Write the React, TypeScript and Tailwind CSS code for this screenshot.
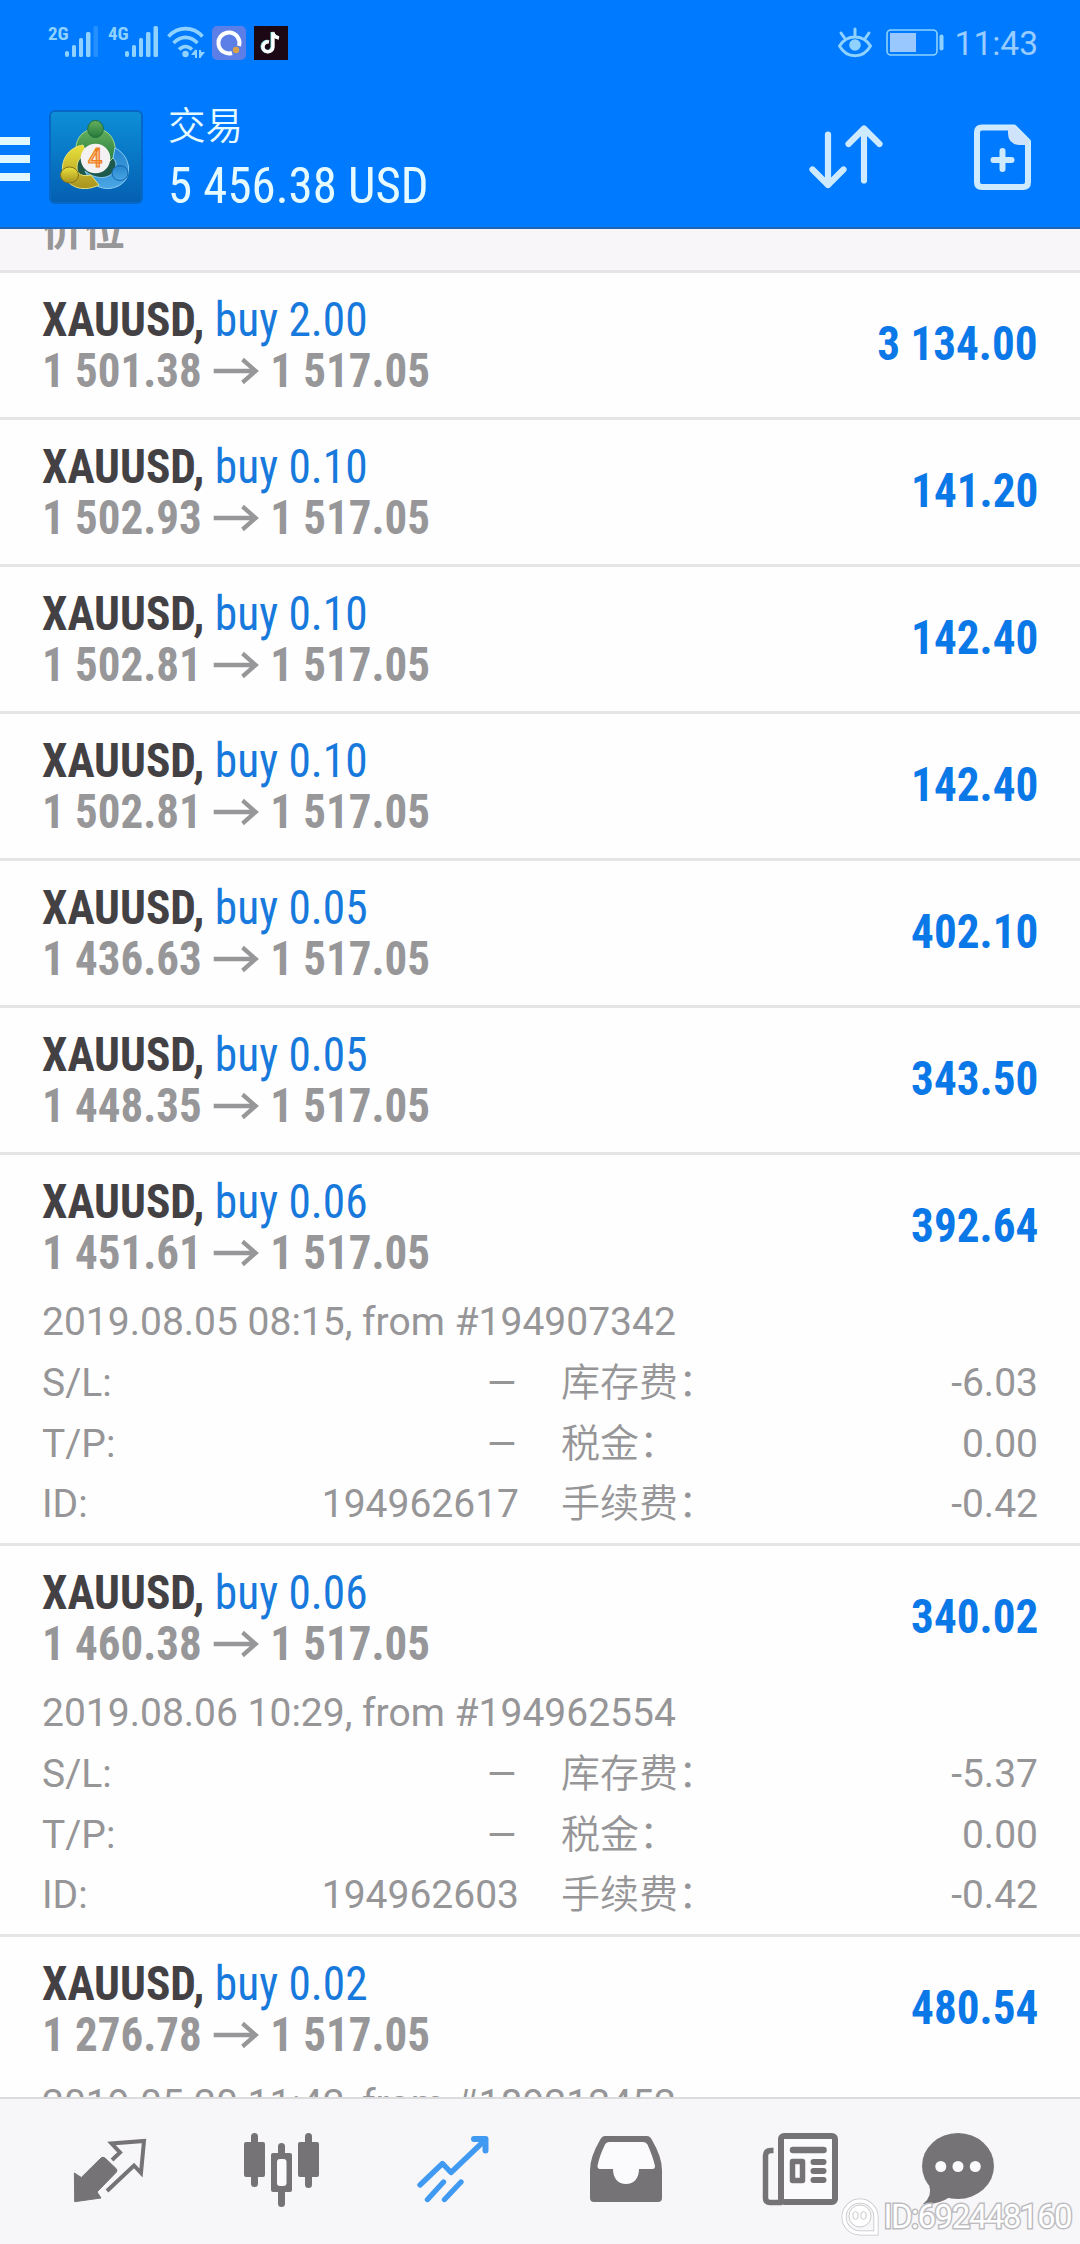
import type { ReactNode } from "react";

type Details = {
  date: string;
  id?: string;
  swap?: string;
  tax?: string;
  fee?: string;
};

type Position = {
  lots: string;
  open: string;
  profit: string;
  details?: Details;
};

const positions: Position[] = [
  { lots: "2.00", open: "1 501.38", profit: "3 134.00" },
  { lots: "0.10", open: "1 502.93", profit: "141.20" },
  { lots: "0.10", open: "1 502.81", profit: "142.40" },
  { lots: "0.10", open: "1 502.81", profit: "142.40" },
  { lots: "0.05", open: "1 436.63", profit: "402.10" },
  { lots: "0.05", open: "1 448.35", profit: "343.50" },
  {
    lots: "0.06",
    open: "1 451.61",
    profit: "392.64",
    details: {
      date: "2019.08.05 08:15, from #194907342",
      id: "194962617",
      swap: "-6.03",
      tax: "0.00",
      fee: "-0.42",
    },
  },
  {
    lots: "0.06",
    open: "1 460.38",
    profit: "340.02",
    details: {
      date: "2019.08.06 10:29, from #194962554",
      id: "194962603",
      swap: "-5.37",
      tax: "0.00",
      fee: "-0.42",
    },
  },
  {
    lots: "0.02",
    open: "1 276.78",
    profit: "480.54",
    details: { date: "2019.05.20 11:42, from #189212452" },
  },
];

const Signal = ({ label, weak }: { label: string; weak?: boolean }) => (
  <div className="flex h-[34px] items-start">
    <span className="w-[17px] font-['Roboto_Condensed',Roboto,sans-serif] text-[19px] leading-[16px] font-bold">
      {label}
    </span>
    <svg className="h-[34px] w-[34px]" viewBox="0 0 34 34" fill="currentColor">
      <rect x="0" y="25" width="4" height="6" rx="2" />
      <rect x="7" y="19" width="4" height="12" rx="1.5" />
      <rect x="14" y="12" width="4" height="19" rx="1.5" />
      <rect x="21" y="6" width="4.5" height="25" rx="1.5" />
      <rect x="28.5" y="0" width="4.5" height="31" rx="1.5" opacity={weak ? 0.25 : 1} />
    </svg>
  </div>
);

const StatusBar = () => (
  <div className="flex h-[86px] items-start justify-between pt-[26px] pr-[42px] pl-12 text-[#8fd2ff]">
    <div className="flex">
      <Signal label="2G" weak />
      <div className="ml-[9px]">
        <Signal label="4G" />
      </div>
      <svg className="ml-2 h-[34px] w-[38px]" viewBox="0 0 38 34" fill="none" stroke="currentColor" strokeWidth="3.6">
        <path d="M1.5 10.5C11 0 26 0 35.5 10.5" />
        <path d="M6.5 17C14 9.5 23 9.5 30.5 17" />
        <path d="M12 23.5C16 19.5 21 19.5 25 23.5" />
        <circle cx="18.5" cy="28" r="3.2" fill="currentColor" stroke="none" />
        <path d="M29 24v8M29 24l-3 4h3M33 24v8M33 31l3-4h-3" strokeWidth="2" />
      </svg>
      <svg className="ml-[7px] h-[34px] w-[34px]" viewBox="0 0 34 34">
        <rect width="34" height="34" rx="5" fill="#5b7fe6" />
        <path d="M20 27A10.5 10.5 0 1 1 27 20" fill="none" stroke="#fff" strokeWidth="4" />
        <circle cx="24" cy="24" r="3.2" fill="#d9a24a" />
      </svg>
      <svg className="ml-2 h-[34px] w-[34px]" viewBox="0 0 34 34">
        <rect width="34" height="34" fill="#1c0714" />
        <g fill="none" strokeWidth="3.4">
          <path d="M15 16a5 5 0 1 0 4 5V6.5c.5 3.500 3 5 6 5.500" stroke="#7fe3df" transform="translate(-.8 -.4)" />
          <path d="M15 16a5 5 0 1 0 4 5V6.5c.5 3.500 3 5 6 5.500" stroke="#fff" />
        </g>
      </svg>
    </div>
    <div className="flex">
      <svg className="h-[34px] w-[34px]" viewBox="0 0 34 34" fill="none" stroke="currentColor" strokeWidth="3" strokeLinecap="round">
        <path d="M1.5 20C9 8 25 8 32.5 20C25 33 9 33 1.5 20Z" />
        <circle cx="17" cy="19" r="5.8" fill="currentColor" stroke="none" />
        <path d="M17 9V3M6.5 12L3 7M27.5 12L31 7" />
      </svg>
      <svg className="ml-[14px] h-[34px] w-[60px]" viewBox="0 0 60 34">
        <rect x="1" y="4" width="50" height="25" rx="4" fill="none" stroke="currentColor" strokeWidth="1.6" />
        <rect x="4" y="7" width="26" height="19" fill="#99c8ff" />
        <rect x="53.5" y="8.5" width="4" height="16" rx="2" fill="currentColor" />
      </svg>
      <span className="ml-[9px] text-[33.5px] leading-[35px] text-[#99ccff]">11:43</span>
    </div>
  </div>
);

const AppLogo = () => (
  <svg className="h-[94px] w-[94px]" viewBox="0 0 94 94">
    <defs>
      <linearGradient id="tile" x1="0" y1="0" x2="0" y2="1">
        <stop offset="0" stopColor="#0d8fd8" />
        <stop offset="1" stopColor="#045fb2" />
      </linearGradient>
      <linearGradient id="green" x1="0" y1="0" x2="0" y2="1">
        <stop offset="0" stopColor="#64b05f" />
        <stop offset="1" stopColor="#24793a" />
      </linearGradient>
      <linearGradient id="yellow" x1="0" y1="0" x2="0" y2="1">
        <stop offset="0" stopColor="#eae23c" />
        <stop offset="1" stopColor="#a8921f" />
      </linearGradient>
      <linearGradient id="blue" x1="0" y1="0" x2="0" y2="1">
        <stop offset="0" stopColor="#2584cc" />
        <stop offset="1" stopColor="#4aa6e4" />
      </linearGradient>
    </defs>
    <rect x="1" y="1" width="92" height="92" rx="5" fill="url(#tile)" stroke="#0668c4" strokeWidth="2" />
    <circle cx="46.5" cy="50" r="21" fill="#1d5a4c" />
    <g strokeWidth="1" strokeLinejoin="round">
      <path d="M27 46C25 28 34 19 47 19C60 19 68 30 66 46L58 54C59 40 56 35 47 35C39 35 37 38 38 44Z" fill="url(#green)" stroke="#a9d98a" />
      <path d="M66 38C78 44 83 58 77 69C70 80 53 82 42 72L36 61C45 69 59 70 64 62C68 56 68 52 64 48Z" fill="url(#blue)" stroke="#8fd0f5" />
      <path d="M34 35C20 37 11 50 14 64C20 79 36 82 50 75L42 65C33 67 28 64 28 58C28 51 31 46 38 45Z" fill="url(#yellow)" stroke="#e8e27e" />
    </g>
    <ellipse cx="46.5" cy="19" rx="7.8" ry="8.5" fill="url(#green)" stroke="#1e6e3c" />
    <ellipse cx="20.5" cy="65" rx="9" ry="8" fill="url(#yellow)" stroke="#82741d" />
    <ellipse cx="71" cy="63" rx="8" ry="7.5" fill="url(#blue)" stroke="#1565ab" />
    <circle cx="46.5" cy="48.5" r="14.8" fill="#f4f1f2" />
    <text x="46" y="57" textAnchor="middle" fontFamily="Roboto, sans-serif" fontSize="25" fontWeight="500" fill="#fbc38a" stroke="#ee7d1c" strokeWidth="1.2">
      4
    </text>
  </svg>
);

const Header = () => (
  <header className="flex h-[229px] shrink-0 flex-col border-b-2 border-[#1a65b8] bg-[#007aff]">
    <StatusBar />
    <div className="flex flex-1 items-start">
      <div className="mt-[51px] flex w-[30px] flex-col gap-[10px]">
        <div className="h-2 bg-[#e2f8ff]" />
        <div className="h-2 bg-[#e2f8ff]" />
        <div className="h-2 bg-[#e2f8ff]" />
      </div>
      <div className="mt-6 ml-[19px]">
        <AppLogo />
      </div>
      <div className="mt-[13px] ml-[25px] flex-1 text-[#e6fbff]">
        <div className="text-[37.5px] leading-[54px] font-[350]">交易</div>
        <div className="origin-left scale-x-[0.977] font-['Roboto_Condensed',Roboto,sans-serif] text-[50px] leading-[66px]">
          5 456.38 USD
        </div>
      </div>
      <svg className="mt-[36px] h-[70px] w-20" viewBox="0 0 80 70" fill="none" stroke="#cdeaff" strokeWidth="6.2" strokeLinecap="round" strokeLinejoin="round">
        <path d="M22 12.5V63M6.500 47.5L22 63L37.5 47.5" />
        <path d="M58 58.5V6.5M42.5 22L58 6.5L73.5 22" />
      </svg>
      <svg className="mt-[36px] mr-[46px] ml-[87px] h-[70px] w-[61px]" viewBox="0 0 61 70" fill="none">
        <path
          d="M9 5.500H41L55 19.500V60Q55 65 50 65H9Q4 65 4 60V10.500Q4 5.500 9 5.500Z"
          stroke="#cdeaff"
          strokeWidth="6"
          strokeLinejoin="round"
        />
        <path d="M35 5H42L56 19V23H46Q35 22 35 11Z" fill="#cfe4fb" />
        <path d="M29.500 29V47M20.500 38H38.500" stroke="#cdeaff" strokeWidth="6" strokeLinecap="round" />
      </svg>
    </div>
  </header>
);

const Arrow = () => (
  <svg className="mr-[12px] ml-[12px] h-[28px] w-[49px]" viewBox="0 0 49 28" fill="none" stroke="currentColor" strokeWidth="4.4">
    <path d="M0 14H45M31 2.500L45 14L31 25.500" />
  </svg>
);

const DetailRow = ({ label, value, label2, value2 }: { label: string; value: ReactNode; label2: string; value2?: string }) => (
  <div className="flex h-[60.5px] items-center leading-[60.5px]">
    <span className="w-[100px]">{label}</span>
    <span className="w-[377px] text-right">{value}</span>
    <span className="ml-[42px] flex-1 font-[350]">{label2}</span>
    <span>{value2}</span>
  </div>
);

const Dash = () => <span className="inline-block origin-right scale-x-[1.28]">–</span>;

const PositionRow = ({ lots, open, profit, details }: Position) => (
  <div className="border-b-[3px] border-[#e5e4e7] px-[42px]">
    <div className="flex h-36 items-center justify-between font-['Roboto_Condensed',Roboto,sans-serif] text-[48px] leading-[51px] font-bold">
      <div>
        <div className="origin-left scale-x-[0.945] whitespace-nowrap text-[#434144]">
          XAUUSD, <span className="font-normal text-[#1779dc]">buy {lots}</span>
        </div>
        <div className="flex origin-left scale-x-[0.937] items-center whitespace-nowrap text-[#979698]">
          {open}
          <Arrow />1 517.05
        </div>
      </div>
      <span className="mb-[3px] origin-right scale-x-[0.94] text-[#0b78e8]">{profit}</span>
    </div>
    {details && (
      <div className="-mt-[7px] text-[39px] text-[#969597]">
        <div className="h-[61px] leading-[61px]">{details.date}</div>
        {details.id && (
          <div className="pb-[8.5px]">
            <DetailRow label="S/L:" value={<Dash />} label2="库存费：" value2={details.swap} />
            <DetailRow label="T/P:" value={<Dash />} label2="税金：" value2={details.tax} />
            <DetailRow label="ID:" value={details.id} label2="手续费：" value2={details.fee} />
          </div>
        )}
      </div>
    )}
  </div>
);

const TabBar = () => (
  <nav className="flex h-[147px] shrink-0 border-t-2 border-[#dcdbde] bg-[#f7f6f9] pt-[30px] pl-[70px] text-[#757376]">
    {/* Quotes */}
    <svg className="h-20 w-20" viewBox="0 0 80 80" fill="currentColor">
      <path d="M4.4 44L11.3 48.5L31 29Q33 27.5 35 29L46.5 40Q47.5 41.7 46 43.5L27 63L31 69L4.7 72.7Z" stroke="currentColor" strokeLinejoin="round" />
      <path d="M42 31L50 23.5L41.5 14.5L74 12L71 44L64 36.5L37 62" fill="none" stroke="currentColor" strokeWidth="4" />
    </svg>
    {/* Charts */}
    <svg className="ml-[91px] h-20 w-20" viewBox="0 0 80 80" fill="currentColor">
      <rect x="10" y="4" width="7" height="54" rx="3.5" />
      <rect x="3" y="13" width="21" height="35" rx="2" />
      <rect x="64" y="4" width="7" height="55" rx="3.5" />
      <rect x="57" y="13" width="21" height="35" rx="2" />
      <rect x="37" y="14" width="7" height="64" rx="3.5" />
      <rect x="30" y="24" width="21" height="39" rx="2" />
      <rect x="36" y="30" width="9.5" height="27" rx="3" fill="#fbfafc" />
    </svg>
    {/* Trade */}
    <svg className="ml-[92px] h-20 w-20" viewBox="0 0 80 80" fill="none" stroke="#409af2" strokeWidth="5.4" strokeLinecap="round" strokeLinejoin="round">
      <path d="M7 56L29.5 34.5L38 43.5L71 12" />
      <path d="M61 10H72.5V21.5" strokeWidth="6" />
      <path d="M30.5 53L14.5 70.5M48 53L31.5 70.5" />
    </svg>
    {/* History */}
    <svg className="ml-[93px] h-20 w-20" viewBox="0 0 80 80" fill="currentColor">
      <path d="M19 7H61Q64 7 66 11Q76 28 76 41V69Q76 73 72 73H8Q4 73 4 69V41Q4 28 14 11Q16 7 19 7Z" />
      <path d="M23 13H57.5Q60 13 61.5 15.5Q67 28 69 37Q69 40 66.5 40H53C53 49 48 55 40 55S27 49 27 40H14Q11.5 40 11.5 37Q13 28 19 15.5Q20 13 23 13Z" fill="#fbfafc" />
    </svg>
    {/* News */}
    <svg className="ml-[94px] h-20 w-20" viewBox="0 0 80 80" fill="none" stroke="currentColor">
      <path d="M13.5 21.5H11Q5.5 21.5 5.5 27V69Q5.5 73.5 10 73.5H22" strokeWidth="5.5" />
      <rect x="21" y="7" width="54" height="66" rx="3" fill="#fbfafc" strokeWidth="6" />
      <path d="M33 21H63.5" strokeWidth="6.5" strokeLinecap="round" />
      <rect x="32.5" y="32.5" width="10" height="19" strokeWidth="5.5" strokeLinejoin="round" />
      <path d="M53.5 33H63.5M53.5 42H63.5M53.5 51H63.5" strokeWidth="6" strokeLinecap="round" />
    </svg>
    {/* Messages */}
    <svg className="ml-[78px] h-20 w-20" viewBox="0 0 80 80" fill="currentColor">
      <ellipse cx="40" cy="37" rx="36" ry="33" />
      <path d="M11 56Q15 67 5 75Q20 76 32 68Z" />
      <g fill="#fbfafc">
        <circle cx="22.8" cy="37.5" r="5.5" />
        <circle cx="40" cy="37.5" r="5.5" />
        <circle cx="57.3" cy="37.5" r="5.5" />
      </g>
    </svg>
  </nav>
);

const App = () => (
  <div className="relative flex h-[2244px] w-[1080px] flex-col overflow-hidden bg-[#fefefe] font-['Roboto','Noto_Sans_CJK_SC',sans-serif]">
    <Header />
    <main className="flex-1 overflow-hidden">
      <div className="flex h-[44px] items-end overflow-hidden border-b-[3px] border-[#e5e4e7] bg-[#f8f6f9] px-[42px]">
        <span className="mb-[8px] text-[41.5px] leading-[60px] font-bold text-[#979698]">价位</span>
      </div>
      {positions.map((position, i) => (
        <PositionRow key={i} {...position} />
      ))}
    </main>
    <TabBar />

    {/* account watermark */}
    <div className="absolute right-[9px] bottom-[7px] flex items-center gap-[4px]">
      <svg className="h-[40px] w-[38px]" viewBox="0 0 38 38" fill="none">
        <path d="M35 35H19A16 16 0 1 1 35 19Z" fill="#f7f6f9" stroke="#c4c3c6" strokeWidth="5" />
        <path d="M35 35H19A16 16 0 1 1 35 19Z" stroke="#fff" strokeWidth="3.5" />
        <circle cx="19" cy="18" r="11" fill="#fff" stroke="#cbcacc" />
        <path d="M12 15q2.500-3 5 0v5q-2.500 3-5 0ZM20 15q2.500-3 5 0v5q-2.500 3-5 0Z" stroke="#cbcacc" />
      </svg>
      <span className="text-[33px] leading-[38px] tracking-[-1.5px] text-white [paint-order:stroke_fill] [-webkit-text-stroke:3px_#bdbcbf]">
        ID:692448160
      </span>
    </div>
  </div>
);

export default App;
